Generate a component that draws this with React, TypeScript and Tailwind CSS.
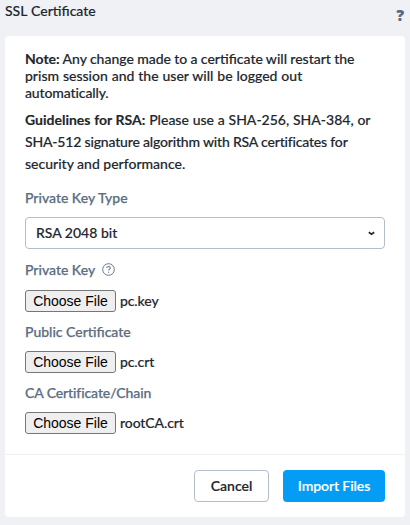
import type { ReactNode } from 'react';

function Label({ children }: { children: ReactNode }) {
  return (
    <div className="flex h-5 items-center whitespace-nowrap text-[14px] font-medium text-[#5b6e82] [-webkit-text-stroke:0.25px]">{children}</div>
  );
}

function FileInput({ name }: { name: string }) {
  return (
    <div className="flex h-[22px] items-center gap-1">
      <button className="h-[22px] w-[91px] shrink-0 whitespace-nowrap rounded-[3px] border border-[#767676] bg-[#efefef] font-['Liberation_Sans',Arial,sans-serif] text-[14px] leading-[20px] text-black [-webkit-text-stroke:0]">
        Choose File
      </button>
      <span className="text-[14px] font-medium leading-[20px] tracking-[-0.1px]">{name}</span>
    </div>
  );
}

export default function App() {
  return (
    <div className="h-[525px] w-[410px] overflow-hidden bg-[#eff1f5] pl-[5px] pr-[5px] font-[Lato,sans-serif] text-[14px] text-[#22272e] [-webkit-text-stroke:0.15px]">
      <header className="flex h-9 items-start justify-between">
        <h1 className="pt-[1px] font-medium leading-[20px] [word-spacing:0.5px]">SSL Certificate</h1>
        <span className="pr-px pt-[6px] font-['Open_Sans',sans-serif] text-[15px] font-extrabold leading-[18px] text-[#56697d]">?</span>
      </header>
      <main className="flex h-[481px] flex-col rounded-[4px] bg-white">
        <section className="h-[419px] border-b border-[#f0f2f5] px-5 pt-[14px] font-medium">
          <p className="whitespace-nowrap leading-[17px]">
            <span className="block w-max [word-spacing:-0.25px]"><b>Note:</b> Any change made to a certificate will restart the</span>
            <span className="block w-max [word-spacing:0.35px]">prism session and the user will be logged out</span>
            <span className="block w-max tracking-[-0.12px]">automatically.</span>
          </p>
          <p className="mt-2 whitespace-nowrap leading-[22px]">
            <span className="block w-max [word-spacing:0.25px]"><b>Guidelines for RSA:</b> Please use a SHA-256, SHA-384, or</span>
            <span className="block w-max tracking-[-0.18px]">SHA-512 signature algorithm with RSA certificates for</span>
            <span className="block w-max">security and performance.</span>
          </p>
          <div className="mt-[12px]"><Label>Private Key Type</Label></div>
          <div className="mt-[10px] flex h-8 items-center justify-between rounded-[4px] border border-[#b4bdc9] pl-[10px] pr-[9px]">
            <span className="-mt-px">RSA 2048 bit</span>
            <svg width="7" height="5" viewBox="0 0 7 5" fill="none" stroke="#22272e" strokeWidth="1.7">
              <path d="M0.8 1.2 3.5 3.2 6.2 1.2" />
            </svg>
          </div>
          <div className="mt-[10px] flex items-center gap-[7px]">
            <Label>Private Key</Label>
            <svg width="13" height="13" viewBox="0 0 13 13" fill="none" stroke="#66788b">
              <circle cx="6.5" cy="6.5" r="5.8" strokeWidth="1" />
              <path d="M4.8 5.1c0-2.2 3.5-2.1 3.5-.1 0 1.2-1.7 1.2-1.7 2.6M6.6 8.7v1.1" strokeWidth="1.1" />
            </svg>
          </div>
          <div className="mt-[11px]"><FileInput name="pc.key" /></div>
          <div className="mt-[9px]"><Label>Public Certificate</Label></div>
          <div className="mt-[10px]"><FileInput name="pc.crt" /></div>
          <div className="mt-[9px] tracking-[-0.1px]"><Label>CA Certificate/Chain</Label></div>
          <div className="mt-[10px]"><FileInput name="rootCA.crt" /></div>
        </section>
        <footer className="flex justify-end gap-[14px] px-5 pt-[15px]">
          <button className="h-8 w-[75px] rounded-[4px] border border-[#b4bdc9] bg-white pb-0.5 font-semibold">Cancel</button>
          <button className="h-8 w-[102px] whitespace-nowrap rounded-[4px] bg-[#059cf5] pb-0.5 font-semibold tracking-[-0.1px] text-white">Import Files</button>
        </footer>
      </main>
    </div>
  );
}
